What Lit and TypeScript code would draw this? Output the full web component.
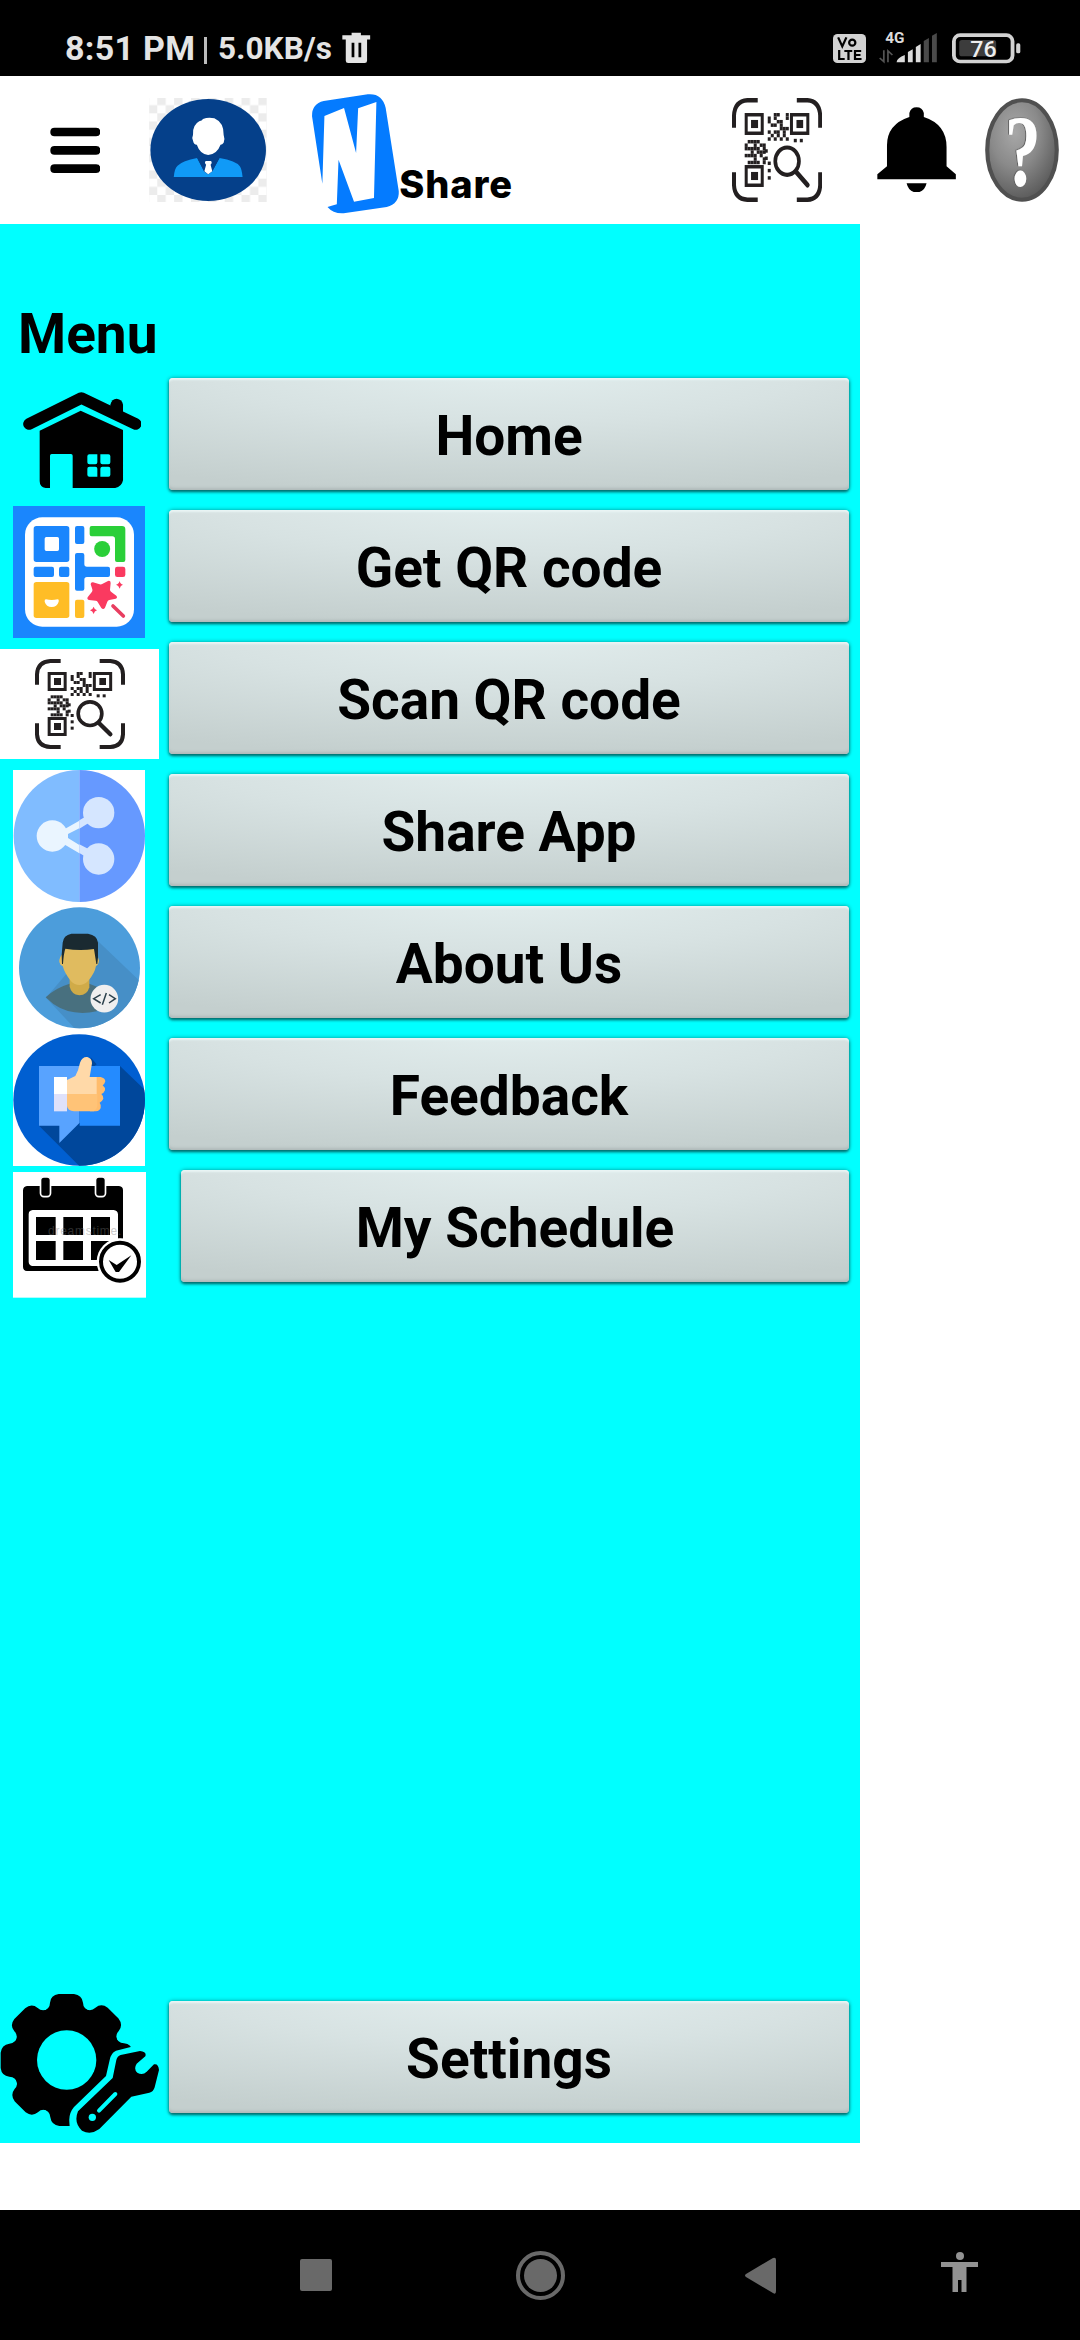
import { LitElement, html, css, svg } from "lit";
import { customElement, property } from "lit/decorators.js";

const cells = (rows: string[], x0: number, y0: number, s = 9) =>
  rows.flatMap((row, r) =>
    [...row].map((c, i) =>
      c === "#" ? svg`<rect x=${x0 + i * s} y=${y0 + r * s} width=${s} height=${s}></rect>` : null,
    ),
  );

const scanIcon = (cls: string) => html`<svg class=${cls} viewBox="0 0 270 270" preserveAspectRatio="none">
  <g fill="none" stroke="#231f20" stroke-width="12">
    <path d="M6 77V46Q8 8 46 6H77M194 6H226Q262 8 264 46V77M264 193V226Q262 262 226 264H194M77 264H46Q8 262 6 226V193"/>
    <g stroke-width="9">
      <rect x="42.500" y="43.500" width="48" height="48"/>
      <rect x="178" y="43.500" width="49" height="48"/>
      <rect x="42.500" y="178.500" width="48" height="48"/>
    </g>
    <circle cx="165" cy="164" r="35.500" stroke-width="11"/>
    <path d="M191 191L226 226" stroke-width="13" stroke-linecap="round"/>
  </g>
  <g fill="#231f20">
    <rect x="57" y="57" width="21" height="21"/><rect x="193" y="57" width="20" height="21"/><rect x="57" y="192" width="21" height="21"/>
    ${cells(["..##..#", "#.#...#", "#..##..", ".##.#..", "....###", "#.##.#.", ".#.#.#.", "#.#.#.#"], 107, 39)}
    ${cells([".####..", "#..#.##", "#####.#", "..#.###", "####.#.", "...#..#", ".####.#"], 38, 109)}
    <rect x="185" y="106" width="9" height="9"/><rect x="203" y="106" width="9" height="9"/>
    <rect x="107" y="165" width="9" height="9"/><rect x="107" y="184" width="9" height="9"/><rect x="107" y="203" width="9" height="9"/>
    <rect x="98" y="133" width="9" height="9"/><rect x="98" y="152" width="9" height="9"/>
  </g>
</svg>`;

const volteIcon = html`<svg class="volte" viewBox="848 102 96 87" preserveAspectRatio="none">
  <rect x="848" y="102" width="96" height="87" rx="13" fill="#d2d2d2"/>
  <g fill="none" stroke="#000" stroke-width="6.500">
    <path d="M863 112L875 139L887 112"/><circle cx="904" cy="128" r="9"/>
    <path d="M866 150V177H882M881 153H904M893 153V180M930 153H912V177H931M912 165H928"/>
  </g>
</svg>`;

const signalIcon = html`<svg class="signal" viewBox="982 80 170 108" preserveAspectRatio="none">
  <text x="1000" y="128" font-family="Roboto, sans-serif" font-weight="700" font-size="44" textLength="56" lengthAdjust="spacingAndGlyphs" fill="#dcdcdc">4G</text>
  <path d="M996 150V184L984 173M1008 186V152L1021 164" fill="none" stroke="#555" stroke-width="5"/>
  <g fill="#dcdcdc"><path d="M1033 186Q1035 172 1057 164V186ZM1066 186V155L1080 147V186ZM1089 186V140L1103 131V186Z"/></g>
  <path d="M1112 186V122L1127 113V186ZM1136 186V106L1150 98V186Z" fill="#4a4a4a"/>
</svg>`;

const batteryIcon = html`<svg class="battery" viewBox="1196 98 200 92" preserveAspectRatio="none">
  <rect x="1201.500" y="104.500" width="170" height="79" rx="18" fill="none" stroke="#d2d2d2" stroke-width="11"/>
  <rect x="1217" y="119" width="107" height="49" rx="8" fill="#3c3c3c"/>
  <rect x="1382" y="129" width="12" height="30" rx="5" fill="#d2d2d2"/>
  <text x="1249" y="169" font-family="Roboto, sans-serif" font-weight="500" font-size="66" textLength="76" lengthAdjust="spacingAndGlyphs" fill="#eee">76</text>
</svg>`;

const trashIcon = html`<svg class="trash" viewBox="992 95 83 92" preserveAspectRatio="none">
  <path d="M1020 97H1047V105H1074V117H1065V180Q1065 187 1058 187H1010Q1003 187 1003 180V117H993V105H1020Z" fill="#e4e4e4"/>
  <path d="M1020 127H1028V170H1020ZM1040 127H1048V170H1040Z" fill="#000"/>
</svg>`;

const burgerIcon = html`<svg class="burger" viewBox="144 380 147 138" preserveAspectRatio="none">
  <rect x="145" y="382" width="145" height="26" rx="12"/><rect x="145" y="437" width="145" height="26" rx="12"/><rect x="145" y="492" width="145" height="26" rx="12"/>
</svg>`;

const profileIcon = html`<svg class="profile" viewBox="432 294 343 312" preserveAspectRatio="none">
  <defs><pattern id="chk" x="456" y="291" width="49" height="49" patternUnits="userSpaceOnUse">
    <rect width="49" height="49" fill="#fff"/><rect width="24.500" height="24.500" fill="#ececec"/><rect x="24.500" y="24.500" width="24.500" height="24.500" fill="#ececec"/>
  </pattern></defs>
  <rect x="432" y="294" width="343" height="312" fill="url(#chk)"/>
  <ellipse cx="604" cy="450" rx="168" ry="153" fill="#05408a"/>
  <path d="M589 357Q604 351 622 355Q650 368 649 405Q653 415 649 428Q645 434 640 434Q630 462 604 465Q580 462 571 434Q562 434 560 422Q556 412 560 404Q558 375 578 364Q586 362 589 357Z" fill="#fff"/>
  <path d="M504 531Q506 505 515 497Q530 482 572 474L592 514L604 523L616 514L637 474Q685 482 696 499Q702 508 704 531Z" fill="#109af7"/>
  <path d="M572 474H637L616 514L604 523L592 514Z" fill="#05408a"/>
  <path d="M597 483H612Q617 488 611 494L616 514L604 523L593 514L598 494Q592 488 597 483Z" fill="#fff"/>
</svg>`;

const logoIcon = html`<svg class="logo" viewBox="905 280 258 364" preserveAspectRatio="none">
  <path d="M908 350Q907 312 942 304L1070 284Q1112 280 1122 325L1160 575Q1162 612 1125 622L1000 641Q970 643 953 622Q968 617 980 614L985 480L1030 606L1088 595L1095 307L1042 326L1036 460L1001 325L944 349L938 552Z" fill="#047bff"/>
</svg>`;

const bellIcon = html`<svg class="bell" viewBox="980 320 230 257" preserveAspectRatio="none">
  <path d="M1074 350V338Q1078 321 1095 321Q1112 321 1116 338V350Q1182 372 1182 440V498L1209 522V537H981V522L1009 498V435Q1009 372 1074 350ZM1066 549H1124Q1118 576 1095 576Q1072 576 1066 549Z"/>
</svg>`;

const helpIcon = html`<svg class="help" viewBox="1292 294 215 312" preserveAspectRatio="none">
  <defs>
    <radialGradient id="hg" cx=".4" cy=".32" r=".7"><stop offset="0" stop-color="#a8a8a8"/><stop offset=".5" stop-color="#8a8a8a"/><stop offset="1" stop-color="#5a5a5a"/></radialGradient>
    <filter id="hs" x="-20%" y="-20%" width="140%" height="140%"><feDropShadow dx="-3" dy="-1" stdDeviation="0" flood-color="#4c4c4c"/></filter>
  </defs>
  <ellipse cx="1399.500" cy="450" rx="101" ry="149" fill="url(#hg)" stroke="#505050" stroke-width="12"/>
  <text filter="url(#hs)" transform="translate(1402 557) scale(.68 1)" font-family="Liberation Serif, serif" font-weight="700" font-size="308" text-anchor="middle" fill="#fff">?</text>
</svg>`;

const houseIcon = html`<svg class="house" viewBox="68 307 356 290">
  <path d="M86 403L243 325L406 403" fill="none" stroke="#000" stroke-width="35" stroke-linecap="round" stroke-linejoin="round"/>
  <path d="M330 352V345Q334 327 349 327Q366 329 368 345V372Z"/>
  <path fill-rule="evenodd" d="M118 423L241 363L368 421V572Q364 592 344 595H217V498Q217 493 212 493H154Q149 493 149 498V595H136Q118 592 118 574ZM267 494Q261 494 261 500V518Q261 524 267 524H285Q291 524 291 518V494ZM300 494V518Q300 524 306 524H324Q330 524 330 518V500Q330 494 324 494ZM267 531Q261 531 261 537V555Q261 561 267 561H291V537Q291 531 285 531ZM306 531Q300 531 300 537V561H324Q330 561 330 555V537Q330 531 324 531Z"/>
</svg>`;

const makerIcon = html`<svg class="maker" viewBox="39 48 396 396">
  <rect x="39" y="48" width="396" height="396" fill="#1a86fd"/>
  <rect x="75" y="82" width="327" height="328" rx="52" fill="#fff"/>
  <g fill="#1a86fd">
    <path fill-rule="evenodd" d="M109 108H200Q208 108 208 116V208Q208 216 200 216H109Q101 216 101 208V116Q101 108 109 108ZM139 141Q134 141 134 146V178Q134 183 139 183H172Q177 183 177 178V146Q177 141 172 141Z"/>
    <rect x="225" y="108" width="28" height="54" rx="6"/>
    <rect x="101" y="230" width="61" height="31" rx="6"/><rect x="177" y="230" width="31" height="31" rx="6"/>
    <path d="M231 189H247Q253 189 253 195V222Q253 230 261 230H324Q330 230 330 236V255Q330 261 324 261H261Q253 261 253 269V296Q253 302 247 302H231Q225 302 225 296V195Q225 189 231 189Z"/>
  </g>
  <path d="M275 108H366Q376 108 376 118V210Q376 216 370 216H351Q345 216 345 210V147Q345 139 337 139H275Q269 139 269 133V114Q269 108 275 108Z" fill="#2acf38"/>
  <circle cx="306.500" cy="177" r="24" fill="#2acf38"/>
  <rect x="101" y="276" width="107" height="108" rx="8" fill="#ffbd26"/>
  <rect x="225" y="329" width="28" height="55" rx="6" fill="#ffbd26"/>
  <path d="M138 328Q155 332 173 328Q178 328 176 335Q171 351 155 351Q139 351 134 335Q133 328 138 328Z" fill="#fff"/>
  <g fill="#fa3a60">
    <rect x="345" y="230" width="31" height="31" rx="7"/>
    <path d="M279 277L299 283Q304 284 308 281L324 273Q332 271 332 279L330 299Q330 303 334 306L349 317Q354 323 347 326L328 330Q324 331 322 335L315 353Q310 360 304 354L293 336Q291 332 287 332L267 330Q259 327 264 320L276 305Q278 302 277 298L272 283Q272 276 279 277Z"/>
    <path d="M359 273Q361 283 369 284Q361 286 359 296Q356 286 348 284Q356 283 359 273ZM281 350Q283 359 291 361Q283 363 281 372Q278 363 270 361Q278 359 281 350Z"/>
  </g>
  <path d="M339 348L370 378" stroke="#e83e60" stroke-width="11" stroke-linecap="round"/>
</svg>`;

const shareIcon = html`<svg class="share" viewBox="39 30 396 396">
  <rect x="39" y="30" width="396" height="396" fill="#fff"/>
  <path d="M238 30A197 198 0 0 0 238 426Z" fill="#80bcff"/><path d="M238 30A197 198 0 0 1 238 426Z" fill="#6699ff"/>
  <path d="M157 228L238 182V205L204 222V234L238 255V280L150 228Z" fill="#eaf5ff"/>
  <path d="M238 181L296 147L300 168L238 206ZM238 253L300 285L290 310L238 279Z" fill="#d5e6ff"/>
  <circle cx="157" cy="228" r="47" fill="#eaf5ff"/>
  <circle cx="296" cy="158" r="47" fill="#d5e6ff"/><circle cx="296" cy="297" r="47" fill="#d5e6ff"/>
</svg>`;

const aboutIcon = html`<svg class="about" viewBox="39 426 396 396">
  <defs><clipPath id="ac"><circle cx="238.500" cy="623.500" r="181.500"/></clipPath></defs>
  <rect x="39" y="426" width="396" height="396" fill="#fff"/>
  <g clip-path="url(#ac)">
    <rect x="39" y="426" width="396" height="396" fill="#4c9ddb"/>
    <path d="M288 538L435 678V822H240L138 713Z" fill="#468fc7"/>
    <path d="M137 712Q165 684 209 671H268L315 690L290 754Q215 770 160 732Z" fill="#48707f"/>
    <path d="M209 650H268V682Q262 705 238 706Q214 703 209 680Z" fill="#d0ab48"/>
    <path d="M189 580Q177 592 178 606Q180 616 188 618Q194 640 212 662Q224 675 238 675Q252 675 265 662Q284 640 288 618Q296 614 297 602Q296 590 289 584Q288 566 270 560H204Q190 564 189 580Z" fill="#e0bb5f"/>
    <path d="M185 585L188 548Q190 526 214 521H264Q292 526 294 548V592L292 612H289L282 567Q238 573 196 566Q191 580 189 612H186Z" fill="#1a2a31"/>
  </g>
  <circle cx="313" cy="716" r="41.500" fill="#efefef"/>
  <path d="M302 704L281 716L302 729M327 704L346 716L327 729M319 699L307 734" fill="none" stroke="#2b414c" stroke-width="4.500"/>
</svg>`;

const feedbackIcon = html`<svg class="feedback" viewBox="39 42 396 396">
  <defs><clipPath id="fc"><circle cx="237.500" cy="240" r="197.500"/></clipPath></defs>
  <rect x="39" y="42" width="396" height="396" fill="#fff"/>
  <g clip-path="url(#fc)">
    <rect x="39" y="42" width="396" height="396" fill="#005fd1"/>
    <path d="M360 138L440 215V440H240L117 317Z" fill="#00479b"/>
    <path d="M272 112L290 133L270 150Z" fill="#00479b"/>
  </g>
  <path d="M117 138H239V308L230 317L178 369V317H117Z" fill="#58a3ff"/>
  <path d="M239 138H360V317H239Z" fill="#248bff"/>
  <path d="M162 171H201V222H162Z" fill="#fff"/><path d="M162 222H201V274H162Z" fill="#dfe1fa"/>
  <path d="M290 171H302Q315 174 316 184Q314 192 308 196Q316 202 315 211Q312 219 304 222Q311 228 310 236Q306 245 299 248Q304 254 302 264Q299 273 288 274H270V171Z" fill="#ffbc6c"/>
  <path d="M201 222V180L226 168Q236 150 240 128Q246 110 262 111Q276 115 276 130L269 171H290V222Z" fill="#ffd9a8"/>
  <path d="M201 222H292V258Q290 270 282 274H222Q203 272 201 258Z" fill="#ffc377"/>
</svg>`;

const calendarIcon = html`<svg class="calendar" viewBox="39 456 399 377">
  <rect x="39" y="456" width="399" height="377" fill="#fff"/>
  <path fill-rule="evenodd" d="M81 498H357Q369 499 369 511V740Q369 752 357 753H81Q69 752 69 740V511Q70 499 81 498ZM98 570Q86 571 86 583V726Q87 737 98 738H341Q353 737 354 726V583Q353 571 341 570Z"/>
  <g stroke="#fff" stroke-width="5"><rect x="121.500" y="471" width="30" height="59" rx="10"/><rect x="286.500" y="471" width="30" height="59" rx="10"/></g>
  <path d="M108 591H167V645H108ZM190 591H249V645H190ZM273 591H330V645H273ZM108 663H167V720H108ZM190 663H249V720H190ZM273 663H330V720H273Z"/>
  <text x="144" y="645" font-family="Liberation Sans, sans-serif" font-size="36" textLength="220" fill="#777" fill-opacity=".4">dreamstime.</text>
  <circle cx="360" cy="725" r="70" fill="#fff"/>
  <path d="M352 656H369V663H352Z" fill="#fff"/>
  <circle cx="360" cy="725" r="57" fill="#fff" stroke="#000" stroke-width="12"/>
  <path d="M326 720L350 735L394 706L357 756H347Z"/>
</svg>`;

const gearIcon = html`<svg class="gear" viewBox="0 72 477 417">
  <circle cx="200" cy="270" r="162"/>
  ${[0, 45, 90, 135, 180, 225, 270, 315].map(
    (a) => svg`<path transform="rotate(${a} 200 270)" d="M126 124Q150 118 150 98Q152 75 176 72H222Q246 75 249 98Q249 118 274 124V160H126Z"></path>`,
  )}
  <g fill="#0ff">
    <circle cx="200" cy="270" r="89"/>
    <path d="M392 231L348 242Q332 250 329 270L318 318L222 411Q206 430 208 455L211 500H480V215Z"/>
  </g>
  <path d="M362 255L420 243Q441 245 436 259L410 281Q400 297 412 308Q428 317 440 305L462 283Q475 280 477 300L464 352Q460 366 448 368L394 380L298 477Q272 496 246 482Q220 458 234 424L338 324L349 270Q352 258 362 255Z"/>
  <path d="M297 422L346 372" stroke="#0ff" stroke-width="12" stroke-linecap="round"/><circle cx="277" cy="442" r="11" fill="#0ff"/>
</svg>`;

@customElement("menu-row")
class MenuRow extends LitElement {
  @property() label = "";
  @property({ type: Boolean, reflect: true }) inset = false;
  static styles = css`
    :host { display: grid; grid-template-columns: 159px 1fr; height: 132px; }
    .icon { display: flex; flex-direction: column; align-items: center; justify-content: center; }
    button {
      margin: 4px 11px 0 10px; height: 112px; padding: 3px 0 0; border: 0; border-radius: 4px;
      font: 700 55px/64px Roboto, sans-serif; color: #000;
      background: radial-gradient(ellipse 100% 112% at 50% -10%, #e2eeee 0%, #d7e2e2 45%, #c4cfce 100%);
      box-shadow: inset 0 3px 2px -1px #e9f5f5, inset 0 -3px 3px -1px #b0baba, 0 2px 3px #006b6b, 0 0 4px #009c9c;
    }
    :host([inset]) button { margin-left: 22px; }
    :host([inset]) .icon { justify-content: flex-end; }
  `;
  render() {
    return html`<div class="icon"><slot></slot></div><button>${this.label}</button>`;
  }
}

@customElement("app-root")
class AppRoot extends LitElement {
  static styles = css`
    :host { display: flex; flex-direction: column; width: 1080px; height: 2340px; background: #fff; overflow: hidden; font-family: Roboto, sans-serif; }
    svg { display: block; flex: none; }
    .status { height: 76px; background: #000; color: #e4e4e4; display: flex; align-items: flex-start; box-sizing: border-box; padding-left: 65px; font-weight: 700; white-space: nowrap; }
    .time { font-size: 34px; line-height: 40px; margin-top: 28px; width: 139px; letter-spacing: .3px; }
    .bar { width: 3px; height: 27px; margin-top: 37px; background: #bbb; }
    .rate { font-size: 31.5px; line-height: 38px; margin: 30px 0 0 11px; width: 124px; letter-spacing: .1px; }
    .trash { width: 28.500px; height: 31px; margin-top: 31.500px; }
    .volte { width: 33px; height: 29px; margin: 34px 13px 0 auto; }
    .signal { width: 58.500px; height: 36px; margin: 26.700px 15px 0 0; overflow: visible; }
    .battery { width: 69px; height: 30.700px; margin: 32.700px 59px 0 0; overflow: visible; }
    .header { height: 148px; display: flex; align-items: flex-start; box-sizing: border-box; padding-left: 49.600px; }
    .burger { width: 50.600px; height: 46px; margin-top: 50.700px; }
    .profile { width: 118px; height: 104px; margin: 22px 0 0 48.600px; }
    .logo { width: 88.800px; height: 121.300px; margin: 17.300px 0 0 44.700px; }
    .brand { font: 800 38px/44px Inter, sans-serif; letter-spacing: .9px; color: #000; margin: 86px 0 0 -1px; width: 332.700px; }
    .scan-top { width: 90.200px; height: 104px; margin-top: 22px; }
    .bell { width: 79.200px; height: 85.700px; margin: 30.700px 0 0 55.300px; }
    .help { width: 74px; height: 104px; margin: 22px 0 0 28px; overflow: visible; }
    .drawer { width: 860px; height: 1919px; background: #0ff; display: flex; flex-direction: column; }
    h1 { margin: 78px 0 8px 18px; font-size: 55px; line-height: 64px; font-weight: 700; }
    .house { width: 118.700px; height: 96.700px; margin-left: 5px; }
    .maker, .share, .about, .feedback { width: 132px; height: 132px; margin-right: 1px; }
    .scan-box { width: 159px; height: 110px; background: #fff; display: flex; align-items: center; justify-content: center; }
    .scan { width: 90px; height: 90px; }
    .calendar { width: 133px; height: 125.700px; }
    .gear { width: 159px; height: 139px; margin-top: -3px; }
    .settings { margin-top: auto; margin-bottom: 14px; height: 132px; }
    .nav { margin-top: auto; height: 130px; background: #000; display: flex; align-items: flex-start; padding-left: 300px; fill: #696969; }
  `;
  render() {
    return html`
      <div class="status">
        <span class="time">8:51 PM</span><span class="bar"></span><span class="rate">5.0KB/s</span>${trashIcon}
        ${volteIcon}${signalIcon}${batteryIcon}
      </div>
      <div class="header">
        ${burgerIcon}${profileIcon}${logoIcon}<span class="brand">Share</span>${scanIcon("scan-top")}${bellIcon}${helpIcon}
      </div>
      <div class="drawer">
        <h1>Menu</h1>
        <menu-row label="Home">${houseIcon}</menu-row>
        <menu-row label="Get QR code">${makerIcon}</menu-row>
        <menu-row label="Scan QR code"><div class="scan-box">${scanIcon("scan")}</div></menu-row>
        <menu-row label="Share App">${shareIcon}</menu-row>
        <menu-row label="About Us">${aboutIcon}</menu-row>
        <menu-row label="Feedback">${feedbackIcon}</menu-row>
        <menu-row label="My Schedule" inset>${calendarIcon}</menu-row>
        <menu-row class="settings" label="Settings">${gearIcon}</menu-row>
      </div>
      <div class="nav">
        <svg width="780" height="130" viewBox="300 2210 780 130">
          <rect x="300" y="2259" width="32" height="32" rx="2"/>
          <circle cx="540.500" cy="2275.500" r="22.500" fill="none" stroke="#696969" stroke-width="4"/><circle cx="540.500" cy="2275.500" r="16.500"/>
          <path d="M773 2258Q776 2257 776 2260V2291Q776 2295 773 2293L746 2277Q744 2275.500 746 2274Z"/>
          <path d="M941 2262H978V2267H966.500V2292H961.500V2280H958V2292H952.500V2267H941Z" fill="#929292"/><circle cx="960" cy="2256" r="4" fill="#929292"/>
        </svg>
      </div>
    `;
  }
}
